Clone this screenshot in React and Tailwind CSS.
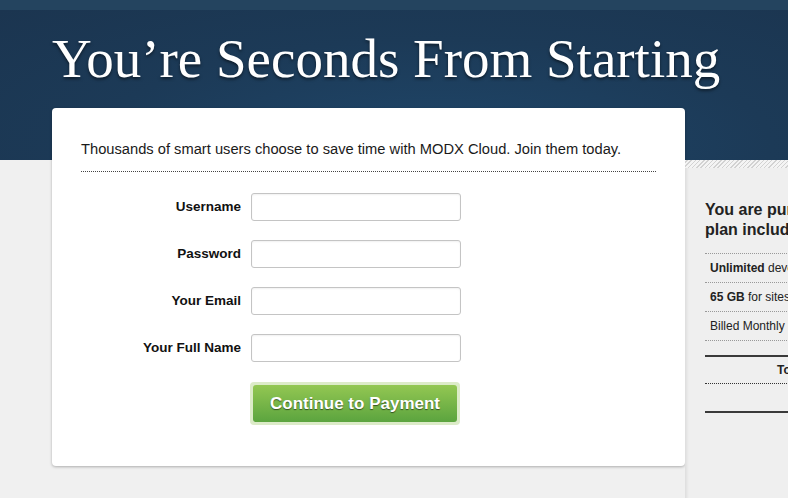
const fields = [
    { id: 'username', label: 'Username', type: 'text' },
    { id: 'password', label: 'Password', type: 'password' },
    { id: 'email', label: 'Your Email', type: 'email' },
    { id: 'fullname', label: 'Your Full Name', type: 'text' },
];

const planRows = [
    { strong: 'Unlimited', rest: ' development sites' },
    { strong: '65 GB', rest: ' for sites and backups' },
    { strong: '', rest: 'Billed Monthly' },
];

function SignupCard() {
    return (
        <div className="-mt-[52px] w-[633px] shrink-0 rounded-[4px] bg-white px-[29px] pb-[41px] pt-[31px] shadow-[0_1px_3px_rgba(0,0,0,0.28)]">
            <p className="border-b border-dotted border-[#444] pb-[11px] text-[14.7px] leading-[21px] text-[#1a1a1a]">
                Thousands of smart users choose to save time with MODX Cloud. Join them today.
            </p>
            <form className="mt-[21px] flex flex-col gap-[19px]" onSubmit={(e) => e.preventDefault()}>
                {fields.map((f) => (
                    <div key={f.id} className="flex items-center">
                        <label htmlFor={f.id} className="w-[170px] pr-[10px] text-right text-[13.5px] font-bold text-[#111]">
                            {f.label}
                        </label>
                        <input
                            id={f.id}
                            type={f.type}
                            className="h-[28px] w-[210px] rounded-[3px] border border-[#c4c4c4] bg-white px-2 text-[13px] shadow-[inset_0_1px_2px_rgba(0,0,0,0.06)] outline-none"
                        />
                    </div>
                ))}
                <div className="ml-[169px] mt-px">
                    <button
                        type="submit"
                        className="h-[43px] w-[210px] rounded-[4px] bg-[#dcebc8] p-[3px]"
                    >
                        <span className="flex h-full w-full items-center justify-center rounded-[3px] bg-gradient-to-b from-[#93c752] to-[#5ba43f] text-[17px] font-bold text-white [text-shadow:0_1px_1px_rgba(0,0,0,0.55)]">
                            Continue to Payment
                        </span>
                    </button>
                </div>
            </form>
        </div>
    );
}

function PlanSidebar() {
    return (
        <aside className="w-[360px] shrink-0 self-stretch">
            <div className="h-[8px] bg-[image:repeating-linear-gradient(-45deg,#d2d2d2_0_1px,#f4f4f4_1px_3px)]" />
            <div className="min-h-[400px] bg-[#efefef] pl-[20px] pr-4 pt-[32px] shadow-[inset_4px_0_3px_-2px_rgba(0,0,0,0.07)]">
                <h2 className="whitespace-nowrap text-[16px] font-bold leading-[20px] text-[#222]">
                    You are purchasing the Developer
                    <br />
                    plan includes:
                </h2>
                <ul className="mt-[13px] w-[260px] border-t border-dotted border-[#999] text-[12px] text-[#222]">
                    {planRows.map((r) => (
                        <li key={r.rest} className="border-b border-dotted border-[#999] py-[6px] pl-[5px] leading-[16px]">
                            {r.strong && <strong className="font-bold">{r.strong}</strong>}
                            {r.rest}
                        </li>
                    ))}
                </ul>
                <div className="mt-[14px] w-[260px] border-t-2 border-[#3a3a3a]">
                    <div className="flex border-b border-dotted border-[#333] py-[6px] text-[12px] font-bold leading-[14px] text-[#222]">
                        <span className="pl-[72px]">Total</span>
                        <span className="ml-auto">$0.00</span>
                    </div>
                    <div className="mt-[27px] border-t-2 border-[#3a3a3a]" />
                </div>
            </div>
        </aside>
    );
}

export default function App() {
    return (
        <div className="min-h-[498px] w-full overflow-hidden bg-[#f0f0f0] font-['Liberation_Sans',Arial,sans-serif]">
            <div className="h-[10px] bg-[#24445f]" />
            <header className="h-[150px] bg-[radial-gradient(ellipse_at_55%_90%,#1f4669_0%,#1c3a57_55%,#1b3550_100%)] pl-[52px] pt-[21px]">
                <h1 className="whitespace-nowrap font-['Liberation_Serif',serif] text-[55px] leading-[55px] text-white [text-shadow:0_2px_3px_rgba(0,0,0,0.5)]">
                    You’re Seconds From Starting
                </h1>
            </header>
            <main className="flex items-start pl-[52px]">
                <SignupCard />
                <PlanSidebar />
            </main>
        </div>
    );
}
